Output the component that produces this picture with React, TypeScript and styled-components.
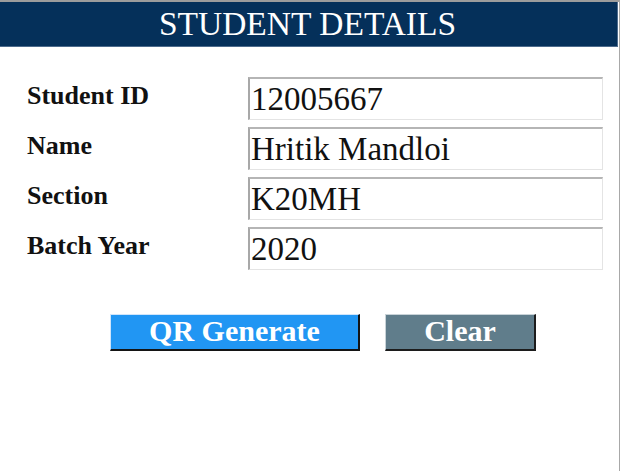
import React from 'react';
import styled, { createGlobalStyle } from 'styled-components';

const GlobalStyle = createGlobalStyle`
  html, body {
    margin: 0;
    padding: 0;
    background: #ffffff;
  }
  body {
    font-family: "Liberation Serif", "Times New Roman", serif;
  }
`;

const Frame = styled.div`
  box-sizing: border-box;
  width: 620px;
  height: 471px;
  border-top: 2px solid #9c9c9c;
  border-right: 1px solid #a8a8a8;
  padding-right: 1px;
  background: #ffffff;
`;

const Header = styled.header`
  box-sizing: border-box;
  height: 45px;
  background: #05305a;
  border-bottom: 1px solid #4d6b8c;
  border-right: 1px solid #4d6b8c;
  display: flex;
  align-items: center;
  justify-content: center;
  padding-right: 2px;
`;

const Title = styled.h1`
  margin: 0;
  font-family: "Liberation Serif", "Times New Roman", serif;
  font-weight: 400;
  font-size: 33.5px;
  line-height: 1;
  color: #ffffff;
`;

const Form = styled.form`
  display: grid;
  grid-template-columns: 221px 355px;
  row-gap: 7px;
  padding: 30px 0 0 27px;
`;

const Label = styled.label`
  display: flex;
  align-items: center;
  height: 43px;
  padding-bottom: 5px;
  box-sizing: border-box;
  font-family: "Liberation Serif", "Times New Roman", serif;
  font-weight: 700;
  font-size: 26px;
  color: #111111;
`;

const Field = styled.input`
  box-sizing: border-box;
  width: 355px;
  height: 43px;
  margin: 0;
  padding: 0 0 0 1px;
  border-style: solid;
  border-width: 2px 1px 1px 2px;
  border-color: #b5b5b5 #e4e4e4 #e4e4e4 #a8a8a8;
  background: #ffffff;
  font-family: "Liberation Serif", "Times New Roman", serif;
  font-size: 33px;
  color: #111111;
  outline: none;
`;

const Actions = styled.div`
  display: flex;
  gap: 25px;
  padding: 44px 0 0 110px;
`;

const Button = styled.button<{ $tone: 'blue' | 'slate'; $w: number }>`
  box-sizing: border-box;
  width: ${(p) => p.$w}px;
  height: 37px;
  margin: 0;
  padding: 0 0 2px;
  border-style: solid;
  border-width: 1px 2px 2px 1px;
  border-color: ${(p) =>
    p.$tone === 'blue'
      ? '#cfe5fb #141414 #141414 #cfe5fb'
      : '#c9d3d8 #1c1c1c #1c1c1c #c9d3d8'};
  background: ${(p) => (p.$tone === 'blue' ? '#2196f3' : '#607d8b')};
  font-family: "Liberation Serif", "Times New Roman", serif;
  font-weight: 700;
  font-size: 30px;
  line-height: 1;
  color: #ffffff;
  cursor: pointer;
`;

const fields = [
  { label: 'Student ID', value: '12005667' },
  { label: 'Name', value: 'Hritik Mandloi' },
  { label: 'Section', value: 'K20MH' },
  { label: 'Batch Year', value: '2020' },
];

export default function App() {
  return (
    <>
      <GlobalStyle />
      <Frame>
        <Header>
          <Title>STUDENT DETAILS</Title>
        </Header>
        <Form onSubmit={(e) => e.preventDefault()}>
          {fields.map((f) => (
            <React.Fragment key={f.label}>
              <Label>{f.label}</Label>
              <Field defaultValue={f.value} />
            </React.Fragment>
          ))}
        </Form>
        <Actions>
          <Button type="button" $tone="blue" $w={250}>
            QR Generate
          </Button>
          <Button type="button" $tone="slate" $w={151}>
            Clear
          </Button>
        </Actions>
      </Frame>
    </>
  );
}
